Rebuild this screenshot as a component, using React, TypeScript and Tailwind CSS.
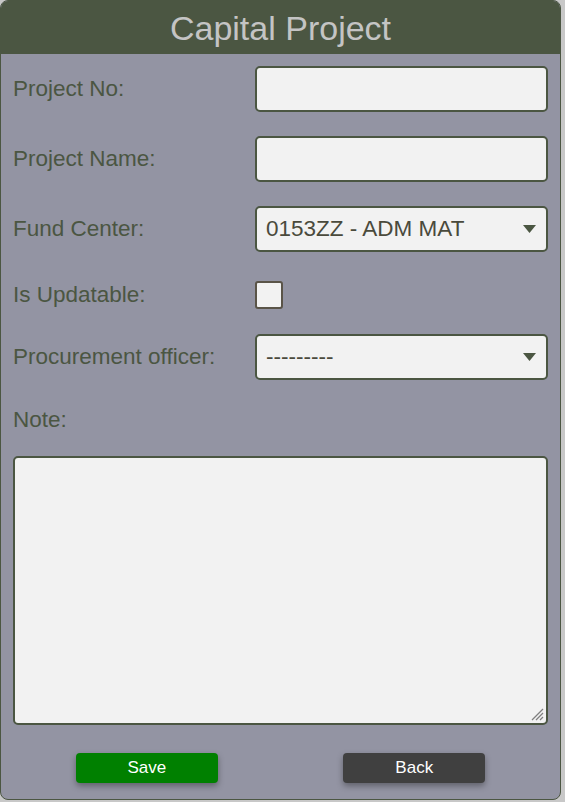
const Arrow = () => (
  <svg className="absolute right-[10px] top-1/2 -translate-y-1/2" width="13" height="8" viewBox="0 0 13 8">
    <path d="M0 0 H13 L6.5 8 Z" fill="#4b5642" />
  </svg>
);

const Row = ({ label, children }: { label: string; children: React.ReactNode }) => (
  <div className="grid grid-cols-[242px_1fr] items-center">
    <label className="text-[22.5px] text-[#4b5642]">{label}</label>
    {children}
  </div>
);

const box = "h-[46px] w-full rounded-[5px] border-2 border-[#4b5642] bg-[#f2f2f2]";

export default function App() {
  return (
    <div className="min-h-screen bg-[#c8c8c8]" style={{ fontFamily: '"Liberation Sans", Arial, sans-serif' }}>
      <div className="w-[561px] h-[800px] overflow-hidden rounded-[8px] border border-[#4b5642] bg-[#9394a3] flex flex-col">
        {/* Header */}
        <div className="h-[53px] bg-[#4b5642] flex items-center justify-center">
          <h1 className="text-[34px] text-[#c4c4c4] leading-none">Capital Project</h1>
        </div>

        <div className="px-[12px] pt-[12px] flex flex-col">
          <Row label="Project No:">
            <div className={box} />
          </Row>
          <div className="mt-[24px]">
            <Row label="Project Name:">
              <div className={box} />
            </Row>
          </div>
          <div className="mt-[24px]">
            <Row label="Fund Center:">
              <div className={`${box} relative flex items-center pl-[9px] text-[22.5px] text-[#4a4a3c]`}>
                0153ZZ - ADM MAT
                <Arrow />
              </div>
            </Row>
          </div>
          <div className="mt-[26px]">
            <div className="grid grid-cols-[242px_1fr] items-center h-[28px]">
              <label className="text-[22.5px] text-[#4b5642]">Is Updatable:</label>
              <div className="w-[28px] h-[28px] rounded-[3px] border-2 border-[#5a5448] bg-[#f2f2f2]" />
            </div>
          </div>
          <div className="mt-[28px]">
            <Row label="Procurement officer:">
              <div className={`${box} relative flex items-center pl-[9px] text-[22.5px] text-[#4a4a3c]`}>
                ---------
                <Arrow />
              </div>
            </Row>
          </div>
          <div className="mt-[28px] h-[24px] flex items-center text-[22.5px] text-[#4b5642]">Note:</div>
          <div className="mt-[24px] relative h-[269px] rounded-[5px] border-2 border-[#4b5642] bg-[#f2f2f2]">
            <svg className="absolute right-[2px] bottom-[2px]" width="14" height="14" viewBox="0 0 14 14">
              <path d="M13 2 L2 13 M13 6 L6 13 M13 10 L10 13" stroke="#808080" strokeWidth="1.3" />
            </svg>
          </div>
          <div className="mt-[28px] grid grid-cols-2">
            <div className="flex justify-center">
              <button className="w-[142px] h-[30px] rounded-[4px] bg-[#008000] text-white text-[17px] shadow-[0_3px_6px_rgba(0,0,0,0.35)]">
                Save
              </button>
            </div>
            <div className="flex justify-center">
              <button className="w-[142px] h-[30px] rounded-[4px] bg-[#404040] text-white text-[17px] shadow-[0_3px_6px_rgba(0,0,0,0.35)]">
                Back
              </button>
            </div>
          </div>
        </div>
      </div>
    </div>
  );
}
